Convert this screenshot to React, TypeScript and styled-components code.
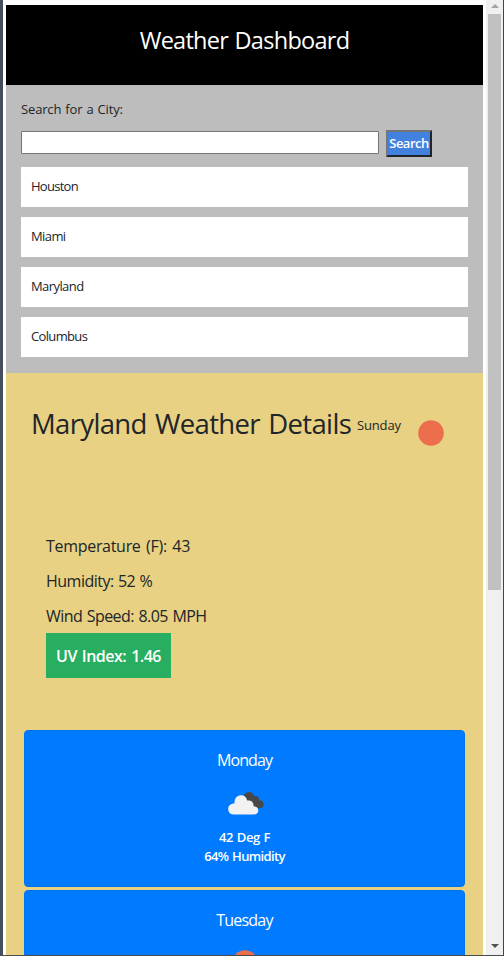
import React from "react";
import styled, { createGlobalStyle } from "styled-components";

const GlobalStyle = createGlobalStyle`
  *, *::before, *::after { box-sizing: border-box; }
  html, body { margin: 0; height: 100%; overflow: hidden; }
  body {
    font-family: "Trebuchet MS", "Open Sans", sans-serif;
    color: #212529;
    background: #fff;
  }
`;

const Frame = styled.div`
  display: flex;
  height: 956px;
  width: 504px;
  overflow: hidden;
  border-left: 3px solid #454e5c;
  border-right: 1px solid #444;
  border-bottom: 1px solid #4a4a4a;
`;

const Page = styled.main`
  width: 483px;
  padding: 5px 3px 0;
  overflow: hidden;
  flex-shrink: 0;
`;

const Label = styled.span<{ $size: number; $track?: number; $word?: number; $weight?: number }>`
  font-size: ${(p) => p.$size}px;
  letter-spacing: ${(p) => p.$track ?? 0}px;
  word-spacing: ${(p) => p.$word ?? 0}px;
  font-weight: ${(p) => p.$weight ?? 400};
  white-space: nowrap;
`;

const Header = styled.header`
  height: 80px;
  background: #000;
  color: #fff;
  text-align: center;
  line-height: 34px;
  padding-top: 18px;
`;

const SearchPanel = styled.section`
  height: 288px;
  background: #bdbdbd;
  padding: 13px 15px 0;
`;

const SearchTitle = styled.label`
  display: block;
  line-height: 20px;
  height: 32px;
`;

const SearchRow = styled.div`
  display: flex;
  align-items: center;
  gap: 7px;
  height: 27px;
`;

const CityInput = styled.input`
  width: 358px;
  height: 23px;
  margin: 0 0 2px;
  border: 1px solid #767676;
  border-radius: 1px;
  background: #fff;
  outline: none;
`;

const SearchButton = styled.button`
  width: 46px;
  height: 27px;
  padding: 0;
  border: 2px solid;
  border-color: #767676 #212529 #212529 #767676;
  background: #4381de;
  color: #fff;
  font-family: inherit;
  line-height: 21px;
`;

const CityList = styled.ul`
  list-style: none;
  margin: 10px 0 0;
  padding: 0;
  display: grid;
  gap: 10px;
`;

const City = styled.li`
  height: 40px;
  padding: 0 10px;
  background: #fff;
  line-height: 37px;
`;

const Details = styled.section`
  height: 1000px;
  background: #e8d182;
  padding: 26px 18px 0;
`;

const Heading = styled.div`
  display: flex;
  height: 135px;
  padding-left: 7px;
  line-height: 50px;
`;

const Title = styled.h3`
  margin: 0;
  width: 326px;
  font-weight: 400;
`;

const Today = styled.div`
  width: 61px;
`;

const SunIcon = styled.svg`
  display: block;
  width: 27px;
  height: 27px;
  margin-top: 21px;
`;

const Readings = styled.div`
  padding-left: 22px;
  line-height: 25px;
  display: grid;
  gap: 10px;
  justify-items: start;
`;

const UvIndex = styled.div`
  margin-top: -6px;
  width: 125px;
  height: 45px;
  background: #27ae60;
  color: #fff;
  padding-left: 10px;
  line-height: 46px;
`;

const Forecast = styled.div`
  display: grid;
  gap: 3px;
  margin-top: 52px;
`;

const Card = styled.article`
  display: flex;
  flex-direction: column;
  align-items: center;
  height: 157px;
  padding-top: 17px;
  border: 1px solid #0074ec;
  border-radius: 4px;
  background: #007bff;
  color: #fff;
  line-height: 19px;
`;

const DayName = styled.div`
  line-height: 24px;
  height: 44px;
`;

const CardIcon = styled.div`
  height: 36px;
  display: flex;
  justify-content: center;
`;

const CloudSvg = styled.svg`
  display: block;
  width: 36px;
  height: 23px;
  margin-left: 3px;
`;

const CardSun = styled.svg`
  display: block;
  width: 27px;
  height: 27px;
  margin: -2px 0 0 1px;
`;

const Scrollbar = styled.aside`
  display: flex;
  flex-direction: column;
  justify-content: space-between;
  align-items: center;
  width: 17px;
  padding: 4px 0 7px;
  background: #f0f0f0;
`;

const Arrow = styled.svg`
  display: block;
  width: 8px;
  height: 4px;
`;

const Thumb = styled.div`
  width: 13px;
  height: 576px;
  margin: 6px 0 auto;
  background: #c1c1c1;
`;

const sun = <circle cx="13" cy="13" r="12.8" fill="#ec6e4c" />;

const cities = [
  { name: "Houston", track: -0.72 },
  { name: "Miami", track: -0.6 },
  { name: "Maryland", track: -0.58 },
  { name: "Columbus", track: -0.65 },
];

const readings = [
  { text: "Temperature (F): 43", track: -0.3, word: 1.7 },
  { text: "Humidity: 52 %", track: -0.5, word: 0.6 },
  { text: "Wind Speed: 8.05 MPH", track: -0.55, word: 0.9 },
];

export default function App() {
  return (
    <>
      <GlobalStyle />
      <Frame>
        <Page>
          <Header>
            <Label $size={23.5} $track={-0.72} $word={1} $weight={500}>Weather Dashboard</Label>
          </Header>
          <SearchPanel>
            <SearchTitle htmlFor="city">
              <Label $size={13} $track={-0.15} $word={0.8}>Search for a City:</Label>
            </SearchTitle>
            <SearchRow>
              <CityInput id="city" />
              <SearchButton>
                <Label $size={13} $track={-0.5} $weight={600}>Search</Label>
              </SearchButton>
            </SearchRow>
            <CityList>
              {cities.map((c) => (
                <City key={c.name}>
                  <Label $size={13} $track={c.track}>{c.name}</Label>
                </City>
              ))}
            </CityList>
          </SearchPanel>
          <Details>
            <Heading>
              <Title>
                <Label $size={27.5} $track={-0.65} $word={1.8}>Maryland Weather Details</Label>
              </Title>
              <Today>
                <Label $size={13} $track={-0.15}>Sunday</Label>
              </Today>
              <SunIcon viewBox="0 0 27 27">{sun}</SunIcon>
            </Heading>
            <Readings>
              {readings.map((r) => (
                <Label key={r.text} $size={16} $track={r.track} $word={r.word}>{r.text}</Label>
              ))}
              <UvIndex>
                <Label $size={16} $track={-0.5} $word={1.3} $weight={600}>UV Index: 1.46</Label>
              </UvIndex>
            </Readings>
            <Forecast>
              <Card>
                <DayName>
                  <Label $size={16} $track={-0.9} $weight={500}>Monday</Label>
                </DayName>
                <CardIcon>
                  <CloudSvg viewBox="0 0 36 23">
                    <path
                      d="M15.5 4C16.5 1.4 18.7 0 21.2 0C23.7 0 25.4 1.6 26.2 4.2C29 3.6 31.3 5.4 31.2 8.2C34 8.2 35.7 9.8 35.7 12.2C35.7 14.6 34.2 16.2 31.5 16.2H26Z"
                      fill="#484848"
                    />
                    <path
                      d="M5.5 22.4C2 22.4 .2 20 .2 16.8C.2 13.5 2.8 11.2 6.6 11.4C6.2 6.6 8.8 3.2 13 3.2C16.2 3.2 18.4 5 19.2 8.6C23 7.6 25.8 10.2 25.6 14.2C28.5 14.2 30.3 16 30.3 18.4C30.3 21 28.5 22.4 25.5 22.4Z"
                      fill="#f2f2f2"
                    />
                  </CloudSvg>
                </CardIcon>
                <Label $size={13} $track={-0.4} $word={0.8} $weight={600}>42 Deg F</Label>
                <Label $size={13} $track={-0.65} $word={1} $weight={600}>64% Humidity</Label>
              </Card>
              <Card>
                <DayName>
                  <Label $size={16} $track={-0.8} $weight={500}>Tuesday</Label>
                </DayName>
                <CardIcon>
                  <CardSun viewBox="0 0 27 27">{sun}</CardSun>
                </CardIcon>
              </Card>
            </Forecast>
          </Details>
        </Page>
        <Scrollbar>
          <Arrow viewBox="0 0 8 4"><path d="M0 4L4 0L8 4Z" fill="#a3a3a3" /></Arrow>
          <Thumb />
          <Arrow viewBox="0 0 8 4"><path d="M0 0H8L4 4Z" fill="#505050" /></Arrow>
        </Scrollbar>
      </Frame>
    </>
  );
}
